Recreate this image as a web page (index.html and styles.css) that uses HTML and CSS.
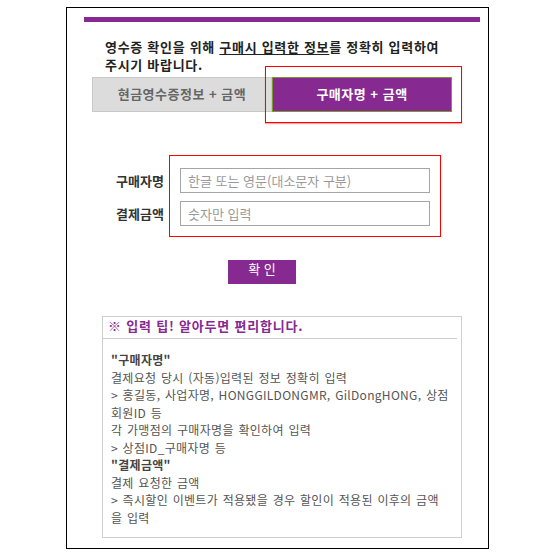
FILE: index.html
```html
<!DOCTYPE html>
<html lang="ko">
<head>
<meta charset="utf-8">
<title>영수증 확인</title>
<link rel="stylesheet" href="styles.css">
</head>
<body>
<div class="frame">
  <div class="topbar"></div>
  <p class="intro">영수증 확인을 위해 <span class="ul">구매시 입력한 정보</span>를 정확히 입력하여<br>주시기 바랍니다.</p>
  <div class="tabs">
    <div class="tab tab-off">현금영수증정보 + 금액</div>
    <div class="tab tab-on">구매자명 + 금액</div>
    <div class="mark mark-tab"></div>
  </div>
  <div class="form">
    <div class="labels">
      <span class="label">구매자명</span>
      <span class="label">결제금액</span>
    </div>
    <div class="fields">
      <input class="field" type="text" placeholder="한글 또는 영문(대소문자 구분)">
      <input class="field" type="text" placeholder="숫자만 입력">
    </div>
  </div>
  <div class="actions"><button class="btn" type="button">확 인</button></div>
  <div class="tips">
    <div class="tips-title">※ 입력 팁! 알아두면 편리합니다.</div>
    <div class="tips-body">
      <div class="tip-head">"구매자명"</div>
      <div>결제요청 당시 (자동)입력된 정보 정확히 입력</div>
      <div>&gt; 홍길동, 사업자명, HONGGILDONGMR, GilDongHONG, 상점</div>
      <div>회원ID 등</div>
      <div>각 가맹점의 구매자명을 확인하여 입력</div>
      <div>&gt; 상점ID_구매자명 등</div>
      <div class="tip-head">"결제금액"</div>
      <div>결제 요청한 금액</div>
      <div>&gt; 즉시할인 이벤트가 적용됐을 경우 할인이 적용된 이후의 금액</div>
      <div>을 입력</div>
    </div>
  </div>
</div>
</body>
</html>
```
FILE: styles.css
```css
* { box-sizing: border-box; }
html, body { margin: 0; padding: 0; background: #fff; }
body {
  font-family: "Noto Sans CJK KR", "Noto Sans", sans-serif;
  color: #333;
}
.frame {
  margin: 7px 0 0 66px;
  width: 423px;
  border: 1px solid #000;
  padding: 9px 0 10px 0;
}
.topbar {
  margin-left: 17px;
  width: 396px;
  height: 5px;
  background: #862a91;
}
.intro {
  margin: 16px 0 0 38px;
  font-size: 13px;
  font-weight: 700;
  line-height: 18px;
  letter-spacing: 0.7px;
  color: #222;
  white-space: nowrap;
}
.ul { text-decoration: underline; text-underline-offset: 2px; }
.tabs {
  position: relative;
  margin-top: 3px;
  padding-left: 25px;
  display: flex;
}
.tab {
  width: 180px;
  height: 35px;
  display: flex;
  align-items: center;
  justify-content: center;
  font-size: 13px;
  font-weight: 700;
  padding-bottom: 3px;
  letter-spacing: 0.5px;
}
.tab-off {
  background: #dcdcdc;
  border: 1px solid #c9c9c9;
  color: #666;
}
.tab-on {
  background: #862a91;
  border: 1px solid #7c9a2c;
  color: #fff;
}
.mark {
  position: absolute;
  border: 1px solid #f00;
  box-shadow: 0 1px 1px rgba(255, 0, 0, 0.35);
}
.mark-tab {
  left: 198px;
  top: -11px;
  width: 197px;
  height: 57px;
}
.form {
  margin-top: 43px;
  padding-left: 49px;
  display: flex;
}
.labels {
  width: 53px;
  padding-top: 13px;
  display: flex;
  flex-direction: column;
  gap: 8px;
}
.label {
  height: 25px;
  line-height: 25px;
  font-size: 13px;
  font-weight: 700;
  color: #333;
  white-space: nowrap;
}
.fields {
  border: 1px solid #f00;
  padding: 12px 10px 10px 10px;
  display: flex;
  flex-direction: column;
  gap: 8px;
}
.field {
  width: 250px;
  height: 25px;
  border: 1px solid #a5a5a5;
  padding: 0 0 0 7px;
  margin: 0;
  font-family: "Noto Sans CJK KR", sans-serif;
  font-size: 13px;
  color: #333;
  outline: none;
}
.field::placeholder { color: #9a9a9a; }
.actions {
  margin-top: 23px;
  padding-left: 161px;
}
.btn {
  display: block;
  width: 68px;
  height: 24px;
  border: 0;
  margin: 0;
  padding: 0 0 6px 0;
  background: #862a91;
  color: #fff;
  font-family: "Noto Sans CJK KR", sans-serif;
  font-size: 13px;
  line-height: 16px;
}
.tips {
  margin: 32px 0 0 35px;
  width: 360px;
  border: 1px solid #cfcfcf;
  padding-bottom: 11px;
}
.tips-title {
  margin-right: 4px;
  padding: 0 0 3px 5px;
  line-height: 18px;
  border-bottom: 1px solid #cfcfcf;
  font-size: 13px;
  font-weight: 700;
  letter-spacing: 0.8px;
  color: #862a91;
  white-space: nowrap;
}
.tips-body {
  margin-top: 12px;
  padding-left: 8px;
  font-size: 12px;
  line-height: 17.5px;
  letter-spacing: 0.3px;
  word-spacing: 1px;
  color: #555;
  white-space: nowrap;
}
.tip-head {
  font-weight: 700;
  color: #444;
}
```
